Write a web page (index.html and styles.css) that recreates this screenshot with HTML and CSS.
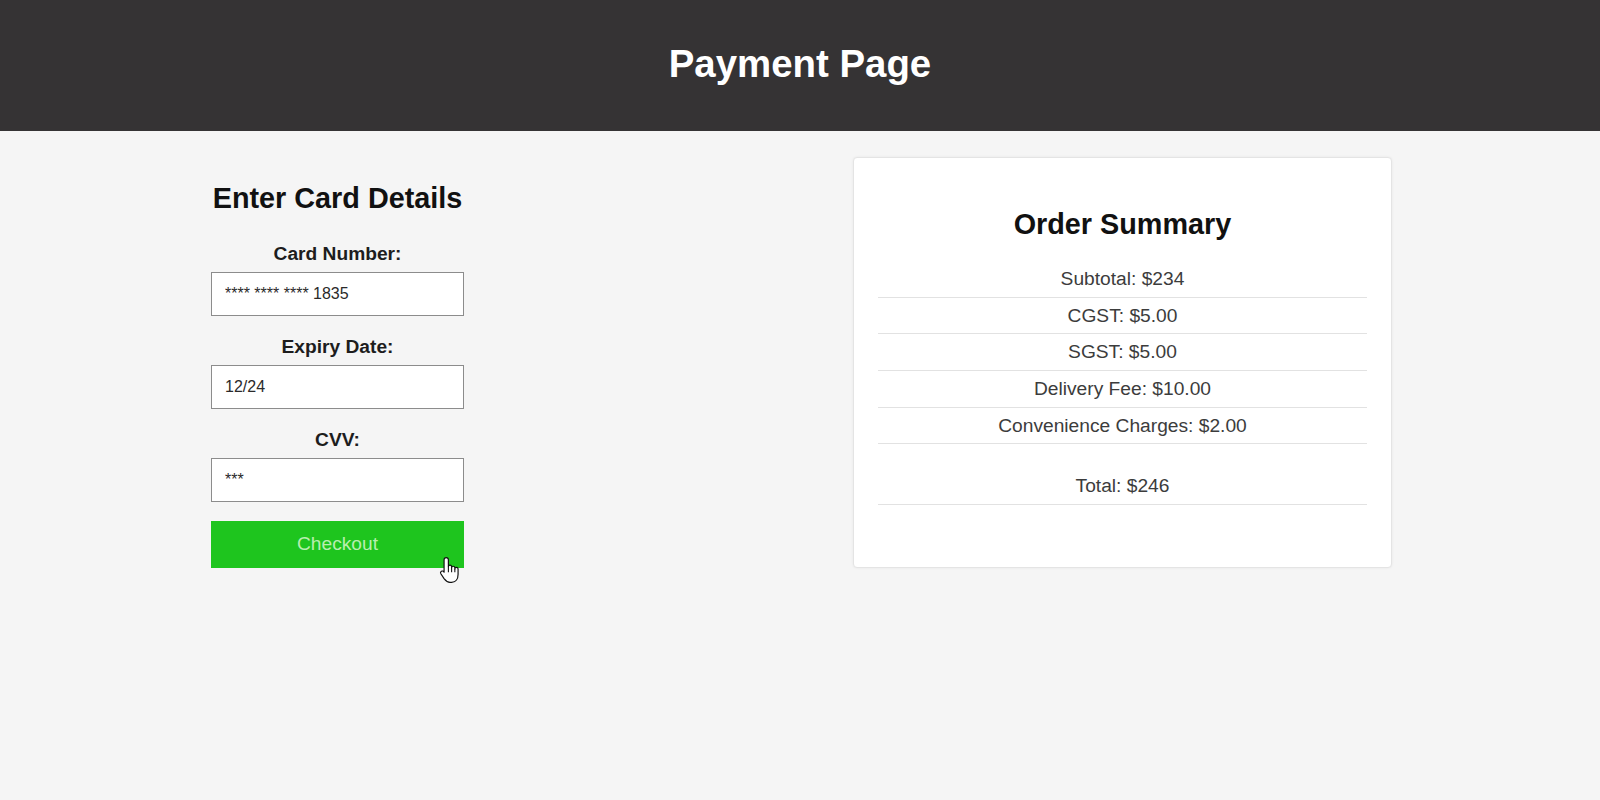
FILE: index.html
```html
<!DOCTYPE html>
<html lang="en">
<head>
<meta charset="utf-8">
<title>Payment Page</title>
<link rel="stylesheet" href="styles.css">
</head>
<body>
<header class="topbar">
  <h1 class="topbar-title">Payment Page</h1>
</header>
<main class="layout">
  <section class="card-form">
    <h2 class="form-title">Enter Card Details</h2>
    <label class="field-label first" for="cardno">Card Number:</label>
    <input class="field-input" id="cardno" type="text" value="**** **** **** 1835">
    <label class="field-label" for="expiry">Expiry Date:</label>
    <input class="field-input" id="expiry" type="text" value="12/24">
    <label class="field-label" for="cvv">CVV:</label>
    <input class="field-input" id="cvv" type="text" value="***">
    <div class="btn-wrap">
      <button class="checkout-btn" type="button">Checkout</button>
      <svg class="cursor" width="22" height="28" viewBox="0 0 20 26" aria-hidden="true">
        <path d="M6.5 1.5 C7.6 1.5 8.5 2.4 8.5 3.5 V10 C8.5 9.2 9.2 8.5 10 8.5 C10.8 8.5 11.5 9.2 11.5 10 V11 C11.5 10.2 12.2 9.5 13 9.5 C13.8 9.5 14.5 10.2 14.5 11 V12 C14.5 11.2 15.2 10.5 16 10.5 C16.8 10.5 17.5 11.2 17.5 12 V17 C17.5 21 15.5 24.5 11.5 24.5 H10 C7.5 24.5 6 23 4.5 21 L1.5 16.5 C1 15.7 1.2 14.7 2 14.2 C2.8 13.7 3.8 13.9 4.3 14.7 L4.5 15 V3.5 C4.5 2.4 5.4 1.5 6.5 1.5 Z" fill="#fff" stroke="#111" stroke-width="1.1" stroke-linejoin="round"/>
        <path d="M8.5 10 V15 M11.5 11 V15 M14.5 12 V15" stroke="#111" stroke-width="1" fill="none"/>
      </svg>
    </div>
  </section>
  <section class="summary">
    <h2 class="summary-title">Order Summary</h2>
    <ul class="summary-list">
      <li class="summary-row">Subtotal: $234</li>
      <li class="summary-row">CGST: $5.00</li>
      <li class="summary-row">SGST: $5.00</li>
      <li class="summary-row">Delivery Fee: $10.00</li>
      <li class="summary-row">Convenience Charges: $2.00</li>
      <li class="summary-row total">Total: $246</li>
    </ul>
  </section>
</main>
</body>
</html>
```
FILE: styles.css
```css
* { box-sizing: border-box; }

html, body {
  margin: 0;
  padding: 0;
}

body {
  background: #f5f5f5;
  font-family: "Liberation Sans", Arial, sans-serif;
  color: #222;
  width: 1600px;
  height: 800px;
  overflow: hidden;
}

.topbar {
  height: 131px;
  background: #353334;
  display: flex;
  align-items: center;
  justify-content: center;
  padding-bottom: 4px;
}

.topbar-title {
  margin: 0;
  color: #fff;
  font-size: 38.4px;
  font-weight: bold;
  line-height: 44px;
}

.layout {
  display: flex;
  align-items: flex-start;
  padding: 26px 0 0 211px;
  gap: 389px;
}

.card-form {
  width: 253px;
  display: flex;
  flex-direction: column;
  align-items: center;
}

.form-title {
  margin: 24.5px 0 0;
  font-size: 28.8px;
  line-height: 33px;
  font-weight: bold;
  color: #111;
  white-space: nowrap;
}

.field-label {
  display: block;
  margin-top: 20px;
  font-size: 19.2px;
  line-height: 22px;
  font-weight: bold;
  color: #1d1d1d;
}

.field-label.first {
  margin-top: 28px;
}

.field-input {
  display: block;
  width: 253px;
  height: 44px;
  margin-top: 7px;
  padding: 0 13px;
  border: 1px solid #8c8c8c;
  background: #fff;
  font-family: "Liberation Sans", Arial, sans-serif;
  font-size: 16px;
  color: #2a2a2a;
  outline: none;
}

.btn-wrap {
  position: relative;
  width: 253px;
  margin-top: 19px;
}

.checkout-btn {
  display: block;
  width: 100%;
  height: 47px;
  border: none;
  background: #1ec51e;
  color: #b9eeb0;
  font-family: "Liberation Sans", Arial, sans-serif;
  font-size: 19.2px;
  cursor: pointer;
}

.cursor {
  position: absolute;
  left: 228px;
  top: 35px;
}

.summary {
  width: 539px;
  background: #fff;
  border: 1px solid #e4e4e4;
  border-radius: 4px;
  box-shadow: 0 0 3px rgba(0, 0, 0, 0.06);
  padding: 23px 24px 62px;
}

.summary-title {
  margin: 27px 0 20px;
  text-align: center;
  font-size: 28.8px;
  line-height: 33px;
  font-weight: bold;
  color: #111;
}

.summary-list {
  list-style: none;
  margin: 0;
  padding: 0;
}

.summary-row {
  text-align: center;
  font-size: 19.2px;
  line-height: 22px;
  padding: 7px 0 6.7px;
  border-bottom: 1px solid #e2e2e2;
  color: #3c3c3c;
}

.summary-row.total {
  margin-top: 24px;
}
```
